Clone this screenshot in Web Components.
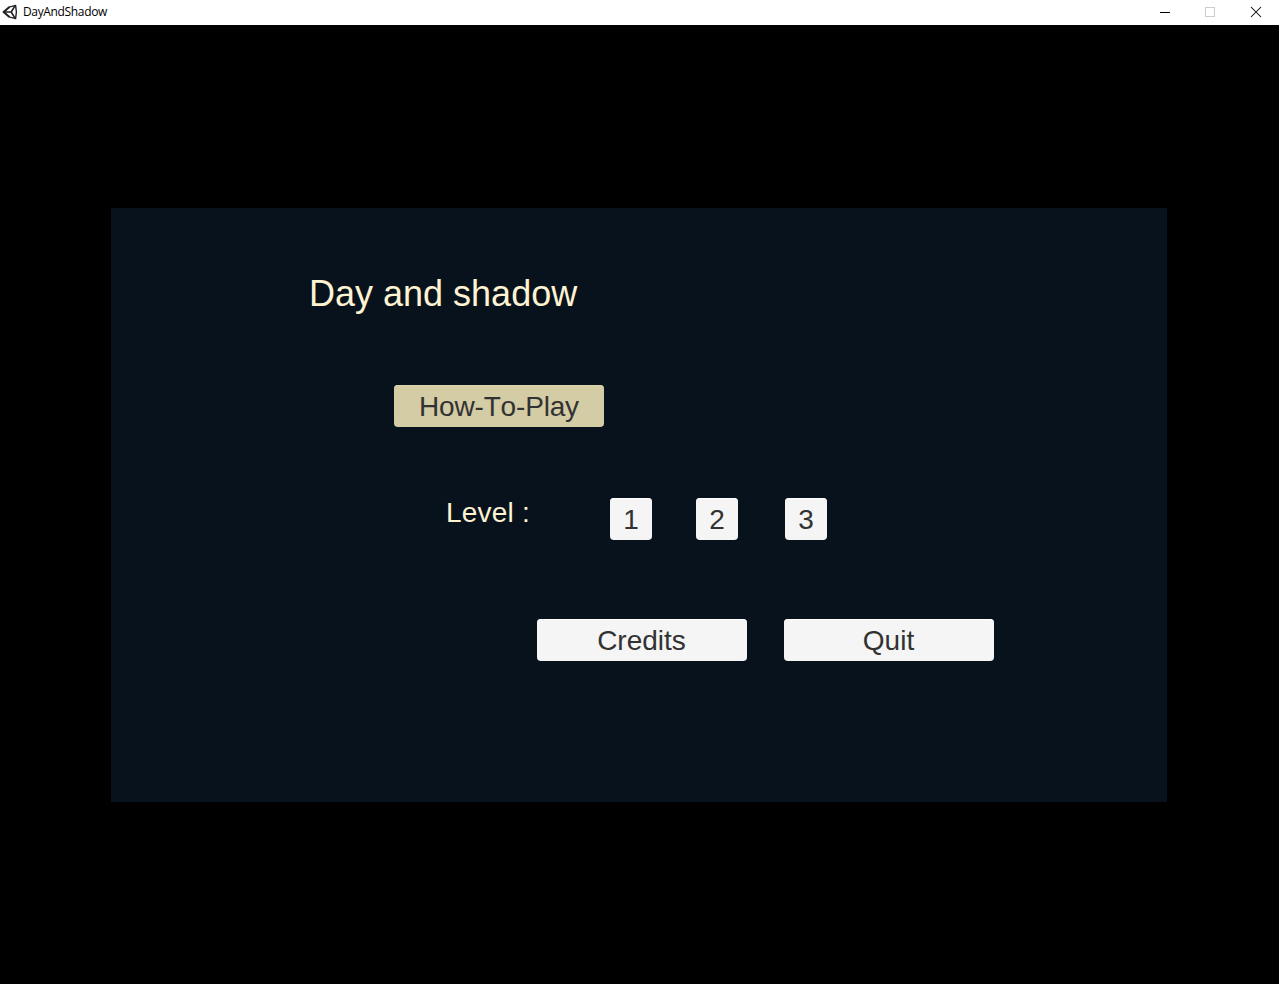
<!DOCTYPE html>
<html lang="en">
<head>
<meta charset="utf-8">
<title>DayAndShadow</title>
<style>
html, body { margin: 0; height: 100%; background: #000; overflow: hidden; }
body { font-family: "Liberation Sans", Arial, sans-serif; }
</style>
</head>
<body>
<game-window>
  <title-bar slot="bar">DayAndShadow</title-bar>
  <main-menu>
    <menu-heading slot="title">Day and shadow</menu-heading>
    <menu-button slot="help" highlighted>How-To-Play</menu-button>
    <menu-label slot="level">Level :</menu-label>
    <menu-button slot="level" small>1</menu-button>
    <menu-button slot="level" small>2</menu-button>
    <menu-button slot="level" small style="margin-left:3px">3</menu-button>
    <menu-button slot="actions">Credits</menu-button>
    <menu-button slot="actions">Quit</menu-button>
  </main-menu>
</game-window>
<script>
function define(name, html) {
  const template = document.createElement('template');
  template.innerHTML = html;
  customElements.define(name, class extends HTMLElement {
    constructor() {
      super();
      this.attachShadow({ mode: 'open' }).append(template.content.cloneNode(true));
    }
  });
}

define('game-window', `
<style>
:host { display: flex; flex-direction: column; height: 100vh; background: #000; }
.stage { flex: 1; padding: 183px 112px 0 111px; }
</style>
<slot name="bar"></slot><div class="stage"><slot></slot></div>`);

define('title-bar', `
<style>
:host { display: flex; align-items: center; height: 25px; flex: none; background: #fff; color: #000;
  font: 12px/24px "Open Sans", "Noto Sans", sans-serif; }
.logo { width: 16px; height: 16px; margin: 0 5px 1px 2px; }
.name { flex: 1; height: 25px; letter-spacing: -0.35px; }
.controls { width: 46px; height: 25px; display: block; }
</style>
<svg class="logo" viewBox="0 0 16 16" fill="none" stroke="#222" stroke-linejoin="round">
  <path d="M7 3.1 13.6 1.4 14.4 8 13.6 14.6 7 12.9" stroke-width="1.4"/>
  <path d="M7.4 2.9 1.6 8 7.4 13.1" stroke-width="2"/>
  <path d="M2 8H9.2M9.2 8 13 1.8M9.2 8 13 14.2" stroke-width="1.6"/>
</svg>
<span class="name"><slot></slot></span>
<svg class="controls" viewBox="0 0 46 25" shape-rendering="crispEdges"><path d="M19 12h10v1h-10z" fill="#000"/></svg>
<svg class="controls" viewBox="0 0 46 25" shape-rendering="crispEdges"><path d="M18.5 7.5h9v9h-9z" fill="none" stroke="#ccc"/></svg>
<svg class="controls" viewBox="0 0 46 25"><path d="M18 7l10 10M28 7l-10 10" fill="none" stroke="#000" stroke-width="1.05"/></svg>`);

define('main-menu', `
<style>
:host { display: flex; flex-direction: column; width: 1056px; height: 594px; box-sizing: border-box;
  background: #07121d; padding-top: 65px; }
.title { padding-left: 198px; height: 42px; }
.help { display: flex; margin: 70px 0 0 283px; }
.level { display: flex; gap: 44px; margin: 71px 0 0 335px; }
.actions { display: flex; gap: 37px; margin: 79px 0 0 426px; }
</style>
<div class="title"><slot name="title"></slot></div>
<div class="help"><slot name="help"></slot></div>
<div class="level"><slot name="level"></slot></div>
<div class="actions"><slot name="actions"></slot></div>`);

define('menu-heading', `
<style>:host { display: block; font-size: 36px; line-height: 42px; color: #fff3d2; white-space: nowrap; }</style>
<slot></slot>`);

define('menu-label', `
<style>:host { display: block; width: 120px; height: 42px; font-size: 28px; line-height: 30px; color: #fff3d2; letter-spacing: .2px; white-space: nowrap; }</style>
<slot></slot>`);

define('menu-button', `
<style>
:host { display: block; width: 210px; height: 42px; }
:host([small]) { width: 42px; }
button { display: block; width: 100%; height: 100%; margin: 0; padding: 0; border: 0; border-radius: 4px;
  background: #f5f5f5; box-shadow: inset 0 1px #fff; color: #323232;
  font: 28px/43px "Liberation Sans", Arial, sans-serif; font-kerning: none; }
:host(:not([small])) button { padding-right: 1px; }
:host([highlighted]) button { background: #d3cca5; box-shadow: inset 0 1px #dcd5ac; letter-spacing: -.18px; padding-right: 0; }
</style>
<button><slot></slot></button>`);
</script>
</body>
</html>
